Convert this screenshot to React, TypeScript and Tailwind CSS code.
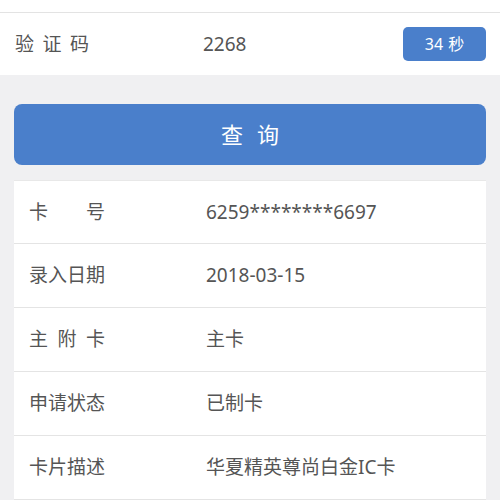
import React from "react";

const font = { fontFamily: '"Noto Sans", "Noto Sans CJK SC", sans-serif' };

const rows: { label: string; value: string }[] = [
  { label: "卡号", value: "6259********6697" },
  { label: "录入日期", value: "2018-03-15" },
  { label: "主附卡", value: "主卡" },
  { label: "申请状态", value: "已制卡" },
  { label: "卡片描述", value: "华夏精英尊尚白金IC卡" },
];

export default function App() {
  return (
    <div
      className="w-[500px] h-[500px] overflow-hidden bg-[#f0f0f2] text-[#555]"
      style={font}
    >
      <div className="h-[13px] bg-white border-b border-[#e3e3e3]" />
      <div className="h-[62px] bg-white flex items-center pl-[15px] pr-[14px]">
        <div className="w-[188px] shrink-0">
          <div className="w-[74px] text-[19px] leading-none [text-align-last:justify]">
            验证码
          </div>
        </div>
        <div className="text-[19px] leading-none">2268</div>
        <div className="ml-auto w-[83px] h-[34px] rounded-[5px] bg-[#4a7fcb] text-white text-[16px] flex items-center justify-center gap-[5px]">
          <span>34</span>
          <span>秒</span>
        </div>
      </div>
      <div className="mt-[29px] mx-[14px] h-[61px] rounded-[8px] bg-[#4a7fcb] text-white text-[22px] flex items-center justify-center gap-[14px]">
        <span>查</span>
        <span>询</span>
      </div>
      <div className="mt-[15px] mx-[14px] bg-white border-t border-[#e8e8e8]">
        {rows.map((r, i) => (
          <div
            key={i}
            className="h-[64px] flex items-center pl-[15px] border-b border-[#e4e4e4] first:h-[63px]"
          >
            <div className="w-[177px] shrink-0">
              <div className="w-[76px] text-[19px] leading-none [text-align-last:justify]">
                {r.label}
              </div>
            </div>
            <div className="text-[19px] leading-none">{r.value}</div>
          </div>
        ))}
      </div>
    </div>
  );
}
